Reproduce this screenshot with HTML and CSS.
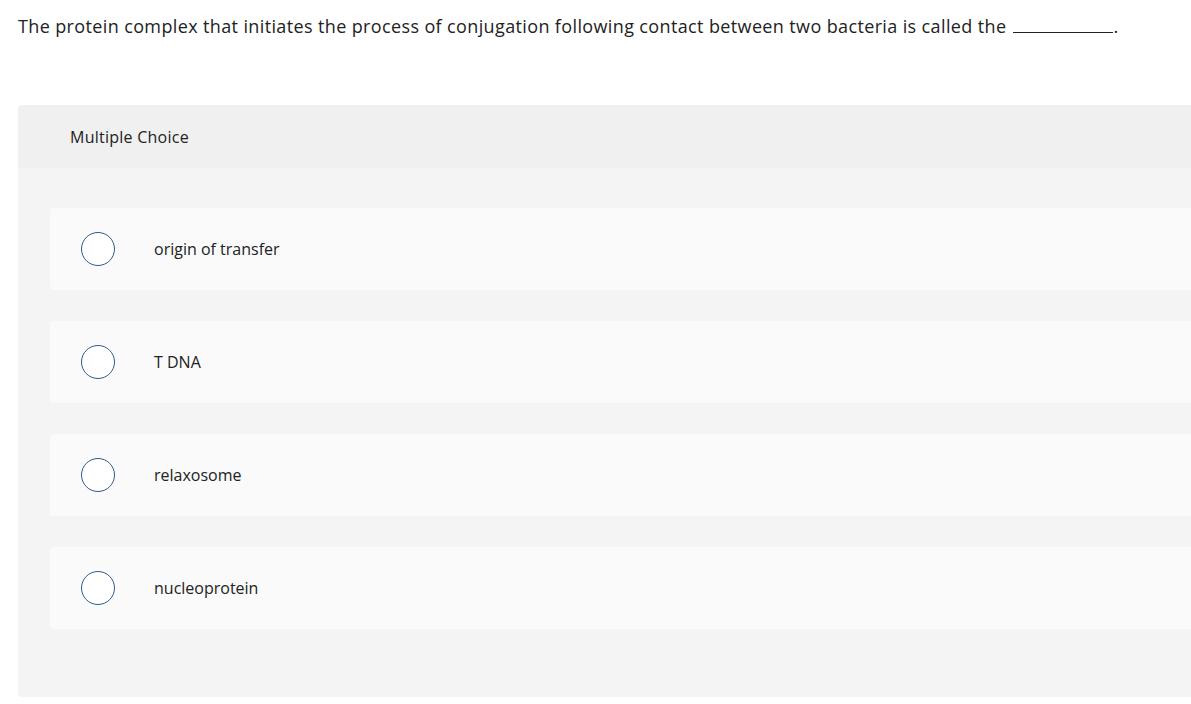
FILE: index.html
```html
<!DOCTYPE html>
<html>
<head>
<meta charset="utf-8">
<link rel="stylesheet" href="styles.css">
</head>
<body>
<p class="question">The protein complex that initiates the process of conjugation following contact between two bacteria is called the <span class="blank"></span>.</p>
<div class="panel">
  <div class="panel-head">Multiple Choice</div>
  <div class="panel-body">
    <div class="option"><span class="radio"></span><span class="label">origin of transfer</span></div>
    <div class="option"><span class="radio"></span><span class="label">T DNA</span></div>
    <div class="option"><span class="radio"></span><span class="label">relaxosome</span></div>
    <div class="option"><span class="radio"></span><span class="label">nucleoprotein</span></div>
  </div>
</div>
</body>
</html>
```
FILE: styles.css
```css
html, body { margin: 0; padding: 0; background: #fff; }
body {
  font-family: "Open Sans", Lato, sans-serif;
  color: #222;
  overflow: hidden;
}
.question {
  margin: 0;
  padding: 14px 0 0 18px;
  font-size: 18px;
  letter-spacing: 0.37px;
  line-height: 24px;
  white-space: nowrap;
}
.blank {
  display: inline-block;
  width: 100px;
  border-bottom: 1px solid #222;
  margin-left: 2px;
  vertical-align: baseline;
}
.panel {
  margin: 67px 0 0 18px;
  width: 1200px;
  border-radius: 4px 0 0 4px;
  overflow: hidden;
}
.panel-head {
  background: #f0f0f0;
  height: 63px;
  padding-left: 52px;
  display: flex;
  align-items: center;
  font-size: 16px;
  letter-spacing: 0.25px;
}
.panel-body {
  background: #f4f4f4;
  padding: 40px 0 68px 32px;
  display: flex;
  flex-direction: column;
  gap: 31px;
}
.option {
  background: #fafafa;
  height: 82px;
  border-radius: 4px 0 0 4px;
  display: flex;
  align-items: center;
  padding-left: 31px;
}
.radio {
  width: 32px;
  height: 32px;
  border: 1.5px solid #2d5b8c;
  border-radius: 50%;
  background: #fff;
  flex: none;
}
.label {
  margin-left: 39px;
  font-size: 16px;
}
```
